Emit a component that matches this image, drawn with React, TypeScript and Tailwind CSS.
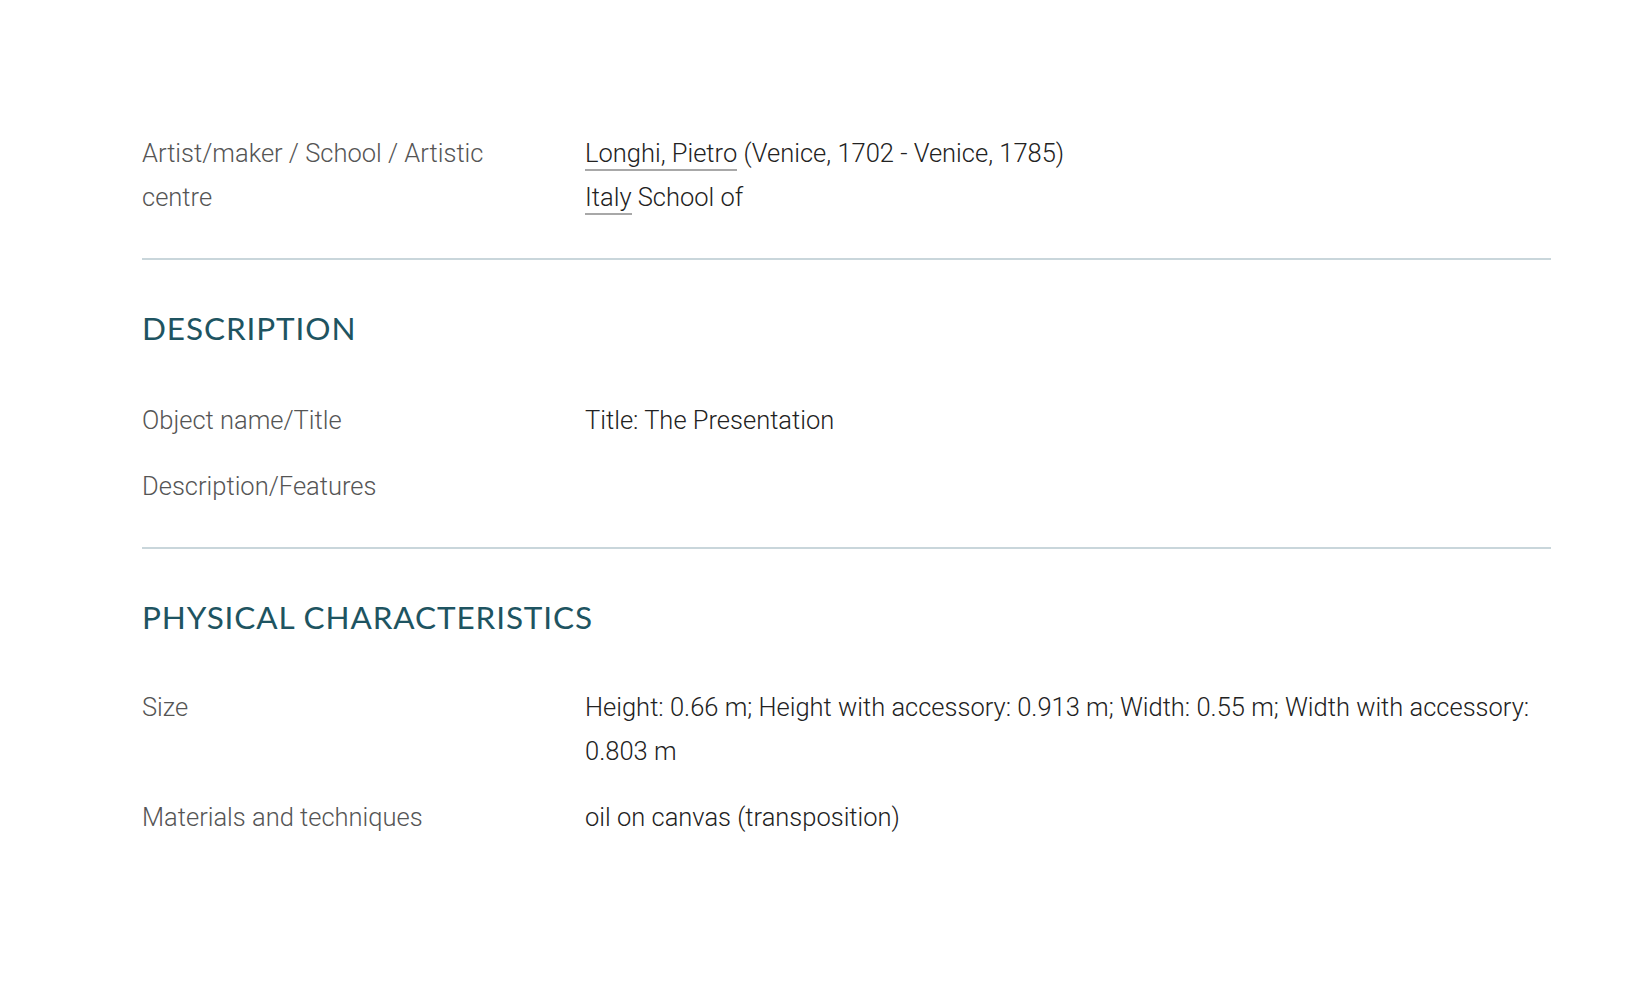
import React from 'react';

interface Row {
  label: string;
  value: React.ReactNode;
}

const Link = ({ children }: { children: React.ReactNode }) => (
  <a href="#" className="border-b-2 border-[#a8a8a8] pb-px text-[#222]">
    {children}
  </a>
);

const artistRows: Row[] = [
  {
    label: 'Artist/maker / School / Artistic centre',
    value: (
      <>
        <div>
          <Link>Longhi, Pietro</Link> (Venice, 1702 - Venice, 1785)
        </div>
        <div>
          <Link>Italy</Link> School of
        </div>
      </>
    ),
  },
];

const descriptionRows: Row[] = [
  { label: 'Object name/Title', value: 'Title: The Presentation' },
  { label: 'Description/Features', value: '' },
];

const physicalRows: Row[] = [
  {
    label: 'Size',
    value: 'Height: 0.66 m; Height with accessory: 0.913 m; Width: 0.55 m; Width with accessory: 0.803 m',
  },
  { label: 'Materials and techniques', value: 'oil on canvas (transposition)' },
];

const Rows = ({ rows }: { rows: Row[] }) => (
  <div className="flex flex-col gap-[22px]">
    {rows.map((row) => (
      <div key={row.label} className="flex">
        <div className="w-[443px] shrink-0 pr-[100px] text-[#555]">{row.label}</div>
        <div className="flex-1 pr-[20px] text-[#222]">{row.value}</div>
      </div>
    ))}
  </div>
);

const Heading = ({ children }: { children: React.ReactNode }) => (
  <h2 className="font-['Lato',sans-serif] text-[31.5px] font-normal leading-none tracking-[0.9px] text-[#1e5461] uppercase">
    {children}
  </h2>
);

export default function App() {
  return (
    <div className="min-h-screen bg-white font-['Roboto',sans-serif] text-[25.5px] font-light leading-[44px]">
      <div className="ml-[142px] w-[1409px] pt-[131px]">
        <Rows rows={artistRows} />

        <hr className="mt-[39px] border-t-2 border-[#c9d6db]" />

        <div className="pt-[53px]">
          <Heading>Description</Heading>
        </div>
        <div className="mt-[53px]">
          <Rows rows={descriptionRows} />
        </div>

        <hr className="mt-[39px] border-t-2 border-[#c9d6db]" />

        <div className="pt-[53px]">
          <Heading>Physical characteristics</Heading>
        </div>
        <div className="mt-[52px]">
          <Rows rows={physicalRows} />
        </div>
      </div>
    </div>
  );
}
